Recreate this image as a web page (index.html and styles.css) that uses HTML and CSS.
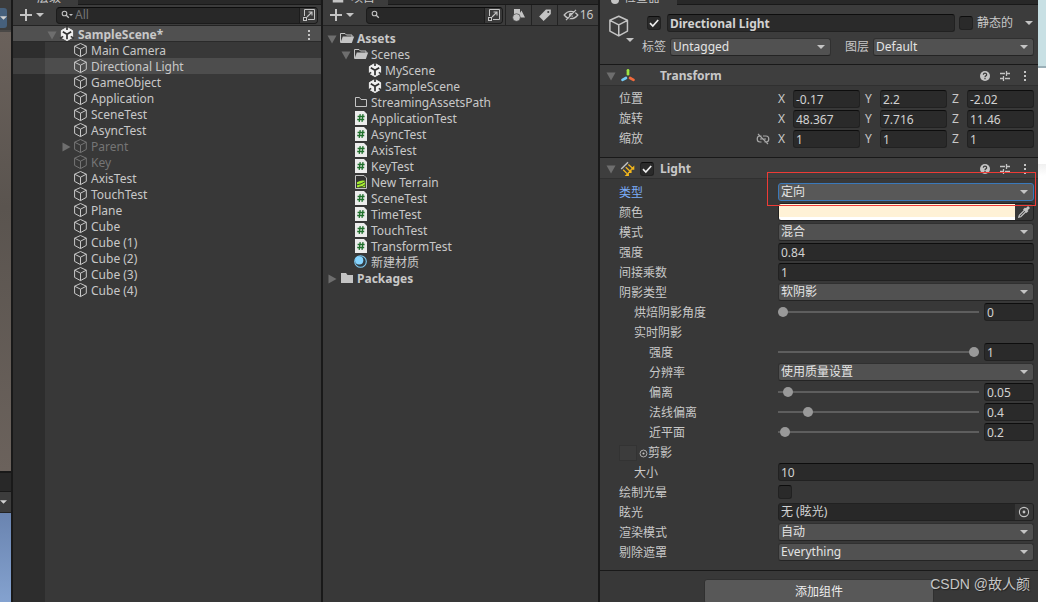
FILE: index.html
```html
<!DOCTYPE html>
<html lang="zh-CN">
<head>
<meta charset="utf-8">
<title>SampleScene - Unity</title>
<link rel="stylesheet" href="styles.css">
</head>
<body>
<svg class="defs" aria-hidden="true">
  <symbol id="cube" viewBox="0 0 16 16"><path d="M8.5 1.5 14.3 4.2V11.4L8.5 14.6 2.6 11.4V4.2ZM2.6 4.2 8.5 7.2 14.3 4.2M8.5 7.2V14.6" fill="none" stroke="currentColor" stroke-width="1" stroke-linejoin="round"/></symbol>
  <symbol id="unity" viewBox="0 0 16 16"><path d="M8 1.4 13.6 4.6V11.4L8 14.6 2.4 11.4V4.6Z" fill="#f0f0f0" stroke="#f0f0f0" stroke-width="1"/><path d="M8 8V13.2M8 8.2 3.8 5.7M8 8.2 12.2 5.7" stroke="#303030" stroke-width="1.7"/><path d="M8 0V4M1 12.4 4.2 10.4M15 12.4 11.8 10.4" stroke="#383838" stroke-width="1.7"/></symbol>
  <symbol id="folder-open" viewBox="0 0 16 16"><path d="M1.5 12.5V3.5H6L7.5 5H13V7" fill="none" stroke="#c4c4c4"/><path d="M3.8 6.5H15.2L12.8 13H1.4Z" fill="#c4c4c4"/></symbol>
  <symbol id="folder-empty" viewBox="0 0 16 16"><path d="M2.5 3.5H6.5L8 5.5H13.5V12.5H2.5Z" fill="none" stroke="#c4c4c4"/></symbol>
  <symbol id="folder" viewBox="0 0 16 16"><path d="M2 3H7L8.5 5H14V13H2Z" fill="#c4c4c4"/></symbol>
  <symbol id="script" viewBox="0 0 16 16"><path d="M2 1H11L14 4V15H2Z" fill="#ececec"/><path d="M7.2 4.2 6.2 11.8M10 4.2 9 11.8M4.6 6.5H11.6M4.2 9.5H11.2" stroke="#1f6f2b" stroke-width="1.3"/></symbol>
  <symbol id="terrain" viewBox="0 0 16 16"><path d="M2.5 14.5V1.5H11L13.5 4V14.5Z" fill="#333" stroke="#c4c4c4"/><path d="M4 8.2Q8 5.5 12.2 6.8V13.2H4Z" fill="#a4f02e"/><path d="M4 10.8Q8 10.5 12.2 7.6M6 13.2Q10 13 12.2 10.6" fill="none" stroke="#333" stroke-width=".9"/></symbol>
  <symbol id="material" viewBox="0 0 16 16"><circle cx="7.5" cy="7.5" r="5.8" fill="#303c44" stroke="#7fcdf5" stroke-width="1.1"/><circle cx="6.2" cy="6.4" r="4.1" fill="#85d4ff"/></symbol>
  <symbol id="plus" viewBox="0 0 12 12"><path d="M6 0V12M0 6H12" stroke="#c4c4c4" stroke-width="2"/></symbol>
  <symbol id="down" viewBox="0 0 8 4"><path d="M0 0H8L4 4Z" fill="currentColor"/></symbol>
  <symbol id="fold-open" viewBox="0 0 10 10"><path d="M0.5 1.5H9.5L5 9.5Z" fill="#6e6e6e"/></symbol>
  <symbol id="fold-closed" viewBox="0 0 10 10"><path d="M1.5 0.5V9.5L9.5 5Z" fill="#6e6e6e"/></symbol>
  <symbol id="search" viewBox="0 0 10 10"><circle cx="3.5" cy="3.5" r="2.3" fill="none" stroke="#c4c4c4" stroke-width="1.1"/><path d="M5.2 5.2 7.8 7.8" stroke="#c4c4c4" stroke-width="1.3"/></symbol>
  <symbol id="popout" viewBox="0 0 14 14"><path d="M2.5 8V1.5H12.5V11.5H6" fill="none" stroke="#c4c4c4"/><rect x="1.5" y="9.5" width="3" height="3" fill="none" stroke="#c4c4c4"/><path d="M5 9 10 4M6.5 4H10V7.5" fill="none" stroke="#c4c4c4" stroke-width="1.1"/></symbol>
  <symbol id="dots" viewBox="0 0 4 12"><path d="M1 1H3V3H1ZM1 5H3V7H1ZM1 9H3V11H1Z" fill="#c4c4c4"/></symbol>
  <symbol id="shapes" viewBox="0 0 14 14"><path d="M2 1H8V6H2ZM9.5 2.5 13 9.5H8.5L7 6.5Z" fill="#c4c4c4"/><circle cx="4.5" cy="9.5" r="3.8" fill="#c4c4c4" stroke="#3a3a3a" stroke-width=".6"/></symbol>
  <symbol id="tag" viewBox="0 0 12 12"><path d="M6.8 1.2H11V5.2L4.8 11.2 1 7.2Z" fill="#c4c4c4"/><circle cx="8.8" cy="3.4" r=".9" fill="#3a3a3a"/></symbol>
  <symbol id="hidden" viewBox="0 0 16 12"><path d="M1.2 6Q4 2.3 8 2.3T14.8 6Q12 9.7 8 9.7T1.2 6Z" fill="none" stroke="#c4c4c4" stroke-width="1.3"/><circle cx="8" cy="6" r="2.2" fill="#c4c4c4"/><path d="M4 11.8 14 .8" stroke="#3a3a3a" stroke-width="1.2"/><path d="M3 11.2 13 .8" stroke="#c4c4c4" stroke-width="1.2"/></symbol>
  <symbol id="help" viewBox="0 0 12 12"><circle cx="6" cy="6" r="5" fill="#c4c4c4"/><path d="M4.3 4.8Q4.4 3.2 6 3.2T7.7 4.7Q7.7 5.5 6.8 5.9 6 6.3 6 7.2M6 8V9.3" fill="none" stroke="#3a3a3a" stroke-width="1.2"/></symbol>
  <symbol id="preset" viewBox="0 0 12 12"><path d="M1 3.5H6M8 3.5H11M7.5 1V6M1 8.5H4M6 8.5H11M4.5 6V11" stroke="#c4c4c4" stroke-width="1.3"/></symbol>
  <symbol id="axes" viewBox="0 0 14 14"><path d="M7 2V5.4" stroke="#9fe644" stroke-width="2.4" stroke-linecap="round"/><path d="M5.2 8.8 2.2 10.4" stroke="#74c9f5" stroke-width="2.4" stroke-linecap="round"/><path d="M8.8 8.8 11.8 10.4" stroke="#f26a3c" stroke-width="2.4" stroke-linecap="round"/></symbol>
  <symbol id="light" viewBox="0 0 16 16"><path d="M1.2 8 8 1.2" stroke="#c4c4c4" stroke-width="1.4"/><path d="M8.4 3.6 12.6 7.2M5.8 6.2 9.8 10M3.2 8.8 7 12.6" stroke="#f5b81c" stroke-width="1.3"/><path d="M14.3 4.6V8.8H10.1ZM11.6 7.7V11.9H7.4ZM8.9 10.8V15H4.7Z" fill="#f5b81c"/></symbol>
  <symbol id="unlink" viewBox="0 0 14 12"><path d="M5.5 3H4Q1.2 3 1.2 6T4 9H5.5M7 3H10Q12.8 3 12.8 6T10 9H8.5M4 6H10M2 1 12 11" fill="none" stroke="#a8a8a8" stroke-width="1.2"/></symbol>
  <symbol id="dropper" viewBox="0 0 12 12"><path d="M1.5 10.5 2 8.8 6.5 4.3 7.8 5.6 3.2 10.1Z" fill="none" stroke="#c4c4c4"/><path d="M6 3 9 6M7.5 4.5 10.3 1.7" stroke="#c4c4c4" stroke-width="2.4"/></symbol>
  <symbol id="target" viewBox="0 0 12 12"><circle cx="6" cy="6" r="4.6" fill="none" stroke="#c4c4c4" stroke-width="1.1"/><circle cx="6" cy="6" r="1.4" fill="#c4c4c4"/></symbol>
  <symbol id="check" viewBox="0 0 12 12"><path d="M2 6.2 4.8 9 10.2 3" fill="none" stroke="#eee" stroke-width="1.7"/></symbol>
</svg>

<main class="editor">
  <aside class="scene-edge">
    <div class="edge-bar"><button class="edge-tool" aria-label="工具"><svg><use href="#down"/></svg></button></div>
    <div class="edge-scene"></div>
    <div class="edge-tab"></div>
    <div class="edge-bar2"><svg><use href="#down"/></svg></div>
    <div class="edge-sky"></div>
  </aside>

  <section class="panel hierarchy">
    <div class="tabs"><span class="tab">层级</span></div>
    <div class="toolbar">
      <button class="add" aria-label="创建"><svg class="plus"><use href="#plus"/></svg><svg class="caret"><use href="#down"/></svg></button>
      <div class="search"><svg class="mag"><use href="#search"/></svg><svg class="tiny"><use href="#down"/></svg><input type="text" aria-label="搜索层级" placeholder="All"><button aria-label="打开搜索"><svg><use href="#popout"/></svg></button></div>
    </div>
    <ul class="tree">
      <li class="scene"><svg class="fold"><use href="#fold-open"/></svg><svg class="ico"><use href="#unity"/></svg><b>SampleScene*</b><button class="more" aria-label="更多"><svg><use href="#dots"/></svg></button></li>
      <li><svg class="ico"><use href="#cube"/></svg>Main Camera</li>
      <li class="selected"><svg class="ico"><use href="#cube"/></svg>Directional Light</li>
      <li><svg class="ico"><use href="#cube"/></svg>GameObject</li>
      <li><svg class="ico"><use href="#cube"/></svg>Application</li>
      <li><svg class="ico"><use href="#cube"/></svg>SceneTest</li>
      <li><svg class="ico"><use href="#cube"/></svg>AsyncTest</li>
      <li class="off parent"><svg class="fold"><use href="#fold-closed"/></svg><svg class="ico"><use href="#cube"/></svg>Parent</li>
      <li class="off"><svg class="ico"><use href="#cube"/></svg>Key</li>
      <li><svg class="ico"><use href="#cube"/></svg>AxisTest</li>
      <li><svg class="ico"><use href="#cube"/></svg>TouchTest</li>
      <li><svg class="ico"><use href="#cube"/></svg>Plane</li>
      <li><svg class="ico"><use href="#cube"/></svg>Cube</li>
      <li><svg class="ico"><use href="#cube"/></svg>Cube (1)</li>
      <li><svg class="ico"><use href="#cube"/></svg>Cube (2)</li>
      <li><svg class="ico"><use href="#cube"/></svg>Cube (3)</li>
      <li><svg class="ico"><use href="#cube"/></svg>Cube (4)</li>
    </ul>
  </section>

  <section class="panel project">
    <div class="tabs"><span class="tab"><svg><use href="#folder"/></svg>项目</span></div>
    <div class="toolbar">
      <button class="add" aria-label="创建"><svg class="plus"><use href="#plus"/></svg><svg class="caret"><use href="#down"/></svg></button>
      <div class="search"><svg class="mag"><use href="#search"/></svg><input type="text" aria-label="搜索项目"><button aria-label="打开搜索"><svg><use href="#popout"/></svg></button></div>
      <div class="filters">
        <button class="filter" aria-label="按类型"><svg><use href="#shapes"/></svg></button>
        <button class="filter" aria-label="按标签"><svg><use href="#tag"/></svg></button>
        <button class="filter count"><svg class="eye"><use href="#hidden"/></svg>16</button>
      </div>
    </div>
    <ul class="files">
      <li><svg class="fold"><use href="#fold-open"/></svg><svg class="ico"><use href="#folder-open"/></svg><b>Assets</b></li>
      <li class="d1"><svg class="fold"><use href="#fold-open"/></svg><svg class="ico"><use href="#folder-open"/></svg>Scenes</li>
      <li class="d3"><svg class="ico"><use href="#unity"/></svg>MyScene</li>
      <li class="d3"><svg class="ico"><use href="#unity"/></svg>SampleScene</li>
      <li class="d2"><svg class="ico"><use href="#folder-empty"/></svg>StreamingAssetsPath</li>
      <li class="d2"><svg class="ico"><use href="#script"/></svg>ApplicationTest</li>
      <li class="d2"><svg class="ico"><use href="#script"/></svg>AsyncTest</li>
      <li class="d2"><svg class="ico"><use href="#script"/></svg>AxisTest</li>
      <li class="d2"><svg class="ico"><use href="#script"/></svg>KeyTest</li>
      <li class="d2"><svg class="ico"><use href="#terrain"/></svg>New Terrain</li>
      <li class="d2"><svg class="ico"><use href="#script"/></svg>SceneTest</li>
      <li class="d2"><svg class="ico"><use href="#script"/></svg>TimeTest</li>
      <li class="d2"><svg class="ico"><use href="#script"/></svg>TouchTest</li>
      <li class="d2"><svg class="ico"><use href="#script"/></svg>TransformTest</li>
      <li class="d2"><svg class="ico"><use href="#material"/></svg>新建材质</li>
      <li><svg class="fold"><use href="#fold-closed"/></svg><svg class="ico"><use href="#folder"/></svg><b>Packages</b></li>
    </ul>
  </section>

  <section class="panel inspector">
    <div class="tabs"><span class="tab"><i class="dot"></i>检查器</span></div>
    <header class="object">
      <div class="object-icon"><svg class="big"><use href="#cube"/></svg><svg class="caret"><use href="#down"/></svg></div>
      <div class="object-fields">
        <div class="line">
          <label class="box"><input type="checkbox" checked aria-label="启用"><svg><use href="#check"/></svg></label>
          <input class="field name" type="text" aria-label="名称" value="Directional Light">
          <label class="static"><span class="box"><input type="checkbox"><svg><use href="#check"/></svg></span>静态的</label>
          <button class="static-menu" aria-label="静态选项"><svg class="caret"><use href="#down"/></svg></button>
        </div>
        <div class="line tags">
          <label for="tag-sel">标签</label>
          <span class="drop"><select id="tag-sel"><option>Untagged</option></select></span>
          <label class="layer" for="layer-sel">图层</label>
          <span class="drop"><select id="layer-sel"><option>Default</option></select></span>
        </div>
      </div>
    </header>

    <header class="component"><svg class="fold"><use href="#fold-open"/></svg><svg class="kind"><use href="#axes"/></svg><h2>Transform</h2>
      <div class="actions"><button aria-label="帮助"><svg><use href="#help"/></svg></button><button aria-label="预设"><svg><use href="#preset"/></svg></button><button aria-label="更多"><svg class="dots"><use href="#dots"/></svg></button></div></header>
    <div class="props transform">
      <div class="row"><span>位置</span><div class="xyz"><label>X<input class="field" type="text" value="-0.17"></label><label>Y<input class="field" type="text" value="2.2"></label><label>Z<input class="field" type="text" value="-2.02"></label></div></div>
      <div class="row"><span>旋转</span><div class="xyz"><label>X<input class="field" type="text" value="48.367"></label><label>Y<input class="field" type="text" value="7.716"></label><label>Z<input class="field" type="text" value="11.46"></label></div></div>
      <div class="row"><span class="scale">缩放<svg><use href="#unlink"/></svg></span><div class="xyz"><label>X<input class="field" type="text" value="1"></label><label>Y<input class="field" type="text" value="1"></label><label>Z<input class="field" type="text" value="1"></label></div></div>
    </div>

    <header class="component"><svg class="fold"><use href="#fold-open"/></svg><svg class="kind"><use href="#light"/></svg><label class="box"><input type="checkbox" checked aria-label="启用 Light"><svg><use href="#check"/></svg></label><h2>Light</h2>
      <div class="actions"><button aria-label="帮助"><svg><use href="#help"/></svg></button><button aria-label="预设"><svg><use href="#preset"/></svg></button><button aria-label="更多"><svg class="dots"><use href="#dots"/></svg></button></div></header>
    <div class="props light">
      <div class="row"><label class="active" for="type">类型</label><span class="drop focus"><select id="type"><option>定向</option></select><i class="marker"></i></span></div>
      <div class="row"><span>颜色</span><div class="color"><button class="swatch" aria-label="颜色"></button><button class="pick" aria-label="吸管"><svg><use href="#dropper"/></svg></button></div></div>
      <div class="row"><label for="mode">模式</label><span class="drop"><select id="mode"><option>混合</option></select></span></div>
      <div class="row"><label for="intensity">强度</label><input id="intensity" class="field" type="text" value="0.84"></div>
      <div class="row"><label for="bounce">间接乘数</label><input id="bounce" class="field" type="text" value="1"></div>
      <div class="row"><label for="shadow">阴影类型</label><span class="drop"><select id="shadow"><option>软阴影</option></select></span></div>
      <div class="row in1"><label for="angle">烘焙阴影角度</label><div class="slide"><input id="angle" type="range" min="0" max="90" value="0"><input class="field" type="text" aria-label="烘焙阴影角度值" value="0"></div></div>
      <div class="row in1"><span>实时阴影</span></div>
      <div class="row in2"><label for="strength">强度</label><div class="slide"><input id="strength" type="range" min="0" max="1" step="0.01" value="1"><input class="field" type="text" aria-label="强度值" value="1"></div></div>
      <div class="row in2"><label for="res">分辨率</label><span class="drop"><select id="res"><option>使用质量设置</option></select></span></div>
      <div class="row in2"><label for="bias">偏离</label><div class="slide"><input id="bias" type="range" min="0" max="2" step="0.01" value="0.05"><input class="field" type="text" aria-label="偏离值" value="0.05"></div></div>
      <div class="row in2"><label for="normal">法线偏离</label><div class="slide"><input id="normal" type="range" min="0" max="3" step="0.01" value="0.4"><input class="field" type="text" aria-label="法线偏离值" value="0.4"></div></div>
      <div class="row in2"><label for="near">近平面</label><div class="slide"><input id="near" type="range" min="0.1" max="10" step="0.1" value="0.2"><input class="field" type="text" aria-label="近平面值" value="0.2"></div></div>
      <div class="row"><span class="cookie"><i class="thumb"></i><svg><use href="#target"/></svg>剪影</span></div>
      <div class="row in1"><label for="size">大小</label><input id="size" class="field" type="text" value="10"></div>
      <div class="row"><label for="halo">绘制光晕</label><span class="box"><input id="halo" type="checkbox"><svg><use href="#check"/></svg></span></div>
      <div class="row"><label for="flare">眩光</label><div class="object-ref"><input id="flare" type="text" value="无 (眩光)"><button aria-label="选择眩光"><svg><use href="#target"/></svg></button></div></div>
      <div class="row"><label for="render">渲染模式</label><span class="drop"><select id="render"><option>自动</option></select></span></div>
      <div class="row"><label for="cull">剔除遮罩</label><span class="drop"><select id="cull"><option>Everything</option></select></span></div>
    </div>
    <footer class="add-component"><button>添加组件</button></footer>
  </section>

  <aside class="page-edge"><div class="sky"></div><div class="paper"></div><div class="shade"></div></aside>
  <span class="credit">CSDN @故人颜</span>
</main>
</body>
</html>
```
FILE: styles.css
```css
* { box-sizing: border-box; }
html, body { height: 100%; margin: 0; }
body {
  overflow: hidden;
  background: #383838;
  color: #c8c8c8;
  font: 12px/16px "Noto Sans", "Noto Sans CJK SC", sans-serif;
}
button, input, select { font: inherit; color: inherit; margin: 0; padding: 0; border: 0; background: none; outline: 0; min-width: 0; }
button { display: flex; align-items: center; justify-content: center; }
svg { display: block; flex: none; }
ul { list-style: none; margin: 0; padding: 0; }
.defs { position: absolute; width: 0; height: 0; }

.editor {
  position: relative;
  display: grid;
  grid-template-columns: 13px minmax(0, 310fr) minmax(0, 277fr) minmax(0, 438fr) 8px;
  height: 100vh;
}
.panel { display: flex; flex-direction: column; overflow: hidden; }
.hierarchy, .project { border-right: 2px solid #191919; }

/* edges of the neighbouring windows */
.scene-edge { display: flex; flex-direction: column; border-right: 2px solid #191919; color: #d2d2d2; }
.edge-bar { height: 32px; padding-top: 8px; background: #3c3c3c; border-bottom: 2px solid #4a4846; }
.edge-tool { width: 7px; height: 20px; background: #46607c; border-radius: 0 3px 3px 0; }
.edge-tool svg, .edge-bar2 svg { width: 7px; height: 4px; }
.edge-scene { flex: 1; background: linear-gradient(#6a615b, #5a544f 40%, #6b625c); border-bottom: 2px solid #191919; }
.edge-tab { height: 19px; background: #282828; border-bottom: 1px solid #191919; }
.edge-bar2 { height: 21px; padding-top: 8px; background: #3c3c3c; border-bottom: 1px solid #232323; }
.edge-sky { height: 89px; background: linear-gradient(#6a84b0, #84a2cf); }
.page-edge { background: #fff; }
.page-edge .sky { height: 68px; background: #c8e0e4; border-bottom: 2px solid #9bb0b8; }
.page-edge .paper { height: 96px; }
.page-edge .shade { height: 12px; background: linear-gradient(#f0f0f0, #fff); }

/* tabs and toolbars */
.tabs { display: flex; height: 5px; flex: none; overflow: hidden; align-items: flex-end; background: linear-gradient(#282828 4px, #191919 4px); }
.tab { display: flex; align-items: center; gap: 6px; height: 15px; flex: none; background: #3c3c3c; line-height: 15px; }
.tab svg { width: 14px; height: 14px; }
.hierarchy .tab { padding: 0 17px 0 24px; }
.project .tab { padding: 0 13px 0 8px; }
.inspector .tab { padding: 0 17px 0 11px; }
.dot { width: 8px; height: 12px; border-radius: 4px; background: #c4c4c4; margin-right: -1px; }
.toolbar { display: flex; align-items: center; height: 21px; flex: none; background: #3c3c3c; border-bottom: 1px solid #232323; padding-left: 7px; }
.add { gap: 4px; margin-right: 12px; color: #c4c4c4; }
.plus { width: 12px; height: 12px; }
.caret { width: 8px; height: 4px; color: #c4c4c4; }
.search { flex: 1; min-width: 0; display: flex; align-items: center; height: 17px; padding-left: 4px; background: #282828; border: 1px solid #1c1c1c; border-top-color: #0d0d0d; border-radius: 4px; }
.search input { flex: 1; height: 15px; }
.search input::placeholder { color: #757575; opacity: 1; }
.search button { width: 18px; height: 15px; background: #3a3a3a; border-radius: 0 3px 3px 0; border-left: 1px solid #1c1c1c; }
.search button svg { width: 14px; height: 14px; }
.mag { width: 10px; height: 10px; }
.tiny { width: 4px; height: 2px; margin: 0 2px 0 -2px; color: #c4c4c4; }
.hierarchy .search { margin-right: 3px; }
.filters { display: flex; align-self: stretch; margin-left: 2px; }
.filter { width: 26px; border-left: 1px solid #232323; }
.filter svg { width: 14px; height: 14px; }
.filter.count { width: 41px; gap: 1px; }
.filter .eye { width: 16px; height: 12px; }

/* lists */
.tree { flex: 1; background: linear-gradient(90deg, #2d2d2d 32px, transparent 32px); }
.tree li, .files li { display: flex; align-items: center; height: 16px; padding-top: 2px; white-space: nowrap; }
.tree li { padding-left: 59px; }
.tree .scene { padding-left: 34px; background: #505050; border-bottom: 1px solid #2a2a2a; }
.tree .scene .ico { margin-left: 2px; }
.tree .selected { background: linear-gradient(90deg, #404040 32px, #4d4d4d 32px); }
.tree .off { color: #757575; }
.tree .parent { padding-left: 48px; }
.tree .parent .ico { margin-left: 1px; }
.ico { width: 16px; height: 16px; margin: 0 3px 2px 0; }
.fold { width: 10px; height: 10px; }
.more { margin-left: auto; margin-right: 10px; }
.more svg { width: 4px; height: 12px; }
.files { padding: 4px 0 0 4px; }
.files .ico { margin: 0 2px 2px; }
.files .d1 { padding-left: 14px; }
.files .d2 { padding-left: 24px; }
.files .d3 { padding-left: 38px; }

/* form controls */
.field { display: block; width: 100%; height: 18px; padding: 0 2px; background: #2a2a2a; border: 1px solid #212121; border-top-color: #0d0d0d; border-radius: 3px; color: #d2d2d2; }
.drop { position: relative; display: block; min-width: 0; height: 18px; }
.drop select { appearance: none; display: block; width: 100%; height: 18px; padding: 0 16px 0 2px; background: #515151; border: 1px solid #303030; border-bottom-color: #242424; border-radius: 3px; color: #e4e4e4; line-height: 16px; }
.drop::after { content: ""; position: absolute; right: 6px; top: 7px; border: 4px solid transparent; border-top-color: #c4c4c4; border-bottom: 0; pointer-events: none; }
.drop.focus select { background: #585858; border-color: #3a79bb; }
.marker { position: absolute; inset: -11px -2px -5px -11px; border: 1px solid #ee3b36; pointer-events: none; }
.box { position: relative; display: block; width: 14px; height: 14px; flex: none; }
.box input { appearance: none; display: block; width: 14px; height: 14px; background: #2a2a2a; border: 1px solid #212121; border-top-color: #0d0d0d; border-radius: 3px; }
.box svg { position: absolute; inset: 1px; width: 12px; height: 12px; visibility: hidden; pointer-events: none; }
.box input:checked + svg { visibility: visible; }

/* inspector */
.object { display: flex; padding: 9px 4px 8px 6px; background: #3c3c3c; border-bottom: 1px solid #191919; }
.object-icon { width: 36px; color: #c4c4c4; }
.object-icon .big { width: 24px; height: 24px; }
.object-icon .caret { margin-left: 20px; }
.object-fields { flex: 1; min-width: 0; display: grid; gap: 6px; }
.line { display: flex; align-items: center; height: 18px; margin-left: 5px; }
.name { flex: 1; margin-left: 6px; font-weight: bold; }
.static { display: flex; align-items: center; gap: 4px; margin-left: 4px; }
.static-menu { margin: 0 1px 0 12px; }
.line.tags { display: grid; margin-left: 0; grid-template-columns: 28px minmax(0, 161fr) 42px minmax(0, 161fr); }
.layer { padding-left: 14px; }
.component { display: flex; align-items: center; height: 21px; flex: none; padding: 1px 7px 0 6px; background: #3e3e3e; border-bottom: 1px solid #303030; }
.component h2 { margin: 0; font-size: 12px; line-height: 16px; }
.kind { width: 16px; height: 16px; margin-left: 4px; }
.kind + h2 { margin-left: 24px; }
.component .box { margin: 0 6px 0 4px; }
.actions { display: flex; gap: 8px; margin-left: auto; }
.actions button, .actions svg { width: 12px; height: 12px; }
.actions .dots { width: 4px; }
.props { display: grid; grid-auto-rows: 18px; gap: 2px; padding: 4px 4px 9px 18px; border-bottom: 1px solid #191919; }
.row { display: grid; grid-template-columns: minmax(0, 160fr) minmax(0, 256fr); align-items: center; white-space: nowrap; }
.row > :first-child { padding-left: 1px; }
.light .row > :first-child { padding-top: 2px; }
.row.in1 > :first-child { padding-left: 16px; }
.row.in2 > :first-child { padding-left: 31px; }
.active { color: #7baefa; }
.xyz { display: grid; grid-template-columns: repeat(3, minmax(0, 1fr)); gap: 5px; }
.xyz label { display: grid; grid-template-columns: 15px minmax(0, 1fr); align-items: center; }
.scale { display: flex; align-items: center; justify-content: space-between; padding-right: 8px; }
.scale svg { width: 14px; height: 12px; }
.slide { display: grid; grid-template-columns: minmax(0, 1fr) 50px; gap: 5px; }
.slide input[type=range] { appearance: none; width: 100%; height: 18px; background: linear-gradient(#5e5e5e, #5e5e5e) center / 100% 2px no-repeat; }
.slide input::-webkit-slider-thumb { appearance: none; width: 10px; height: 10px; border-radius: 50%; background: #999; }
.color, .object-ref { display: flex; height: 18px; border: 1px solid #212121; border-radius: 3px; overflow: hidden; }
.swatch { flex: 1; background: linear-gradient(#fff2d6 13px, #fff 13px); }
.pick { width: 18px; }
.pick svg { width: 14px; height: 14px; }
.object-ref { background: #282828; }
.object-ref input { flex: 1; padding-left: 2px; color: #d2d2d2; }
.object-ref button { width: 18px; background: #363636; }
.object-ref svg { width: 12px; height: 12px; }
.cookie { display: flex; align-items: center; }
.cookie .thumb { width: 18px; height: 16px; margin-right: 2px; border: 1px solid #333; background: #3c3c3c; }
.cookie svg { width: 9px; height: 9px; }
.add-component { display: flex; justify-content: center; padding-top: 8px; }
.add-component button { width: 230px; height: 25px; background: #585858; border: 1px solid #303030; border-radius: 3px; color: #eee; }
.credit { position: absolute; right: 16px; bottom: 8px; font: 14px/20px "Liberation Sans", "Noto Sans CJK SC", sans-serif; color: #c6c6c6; text-shadow: 1px 1px 1px #222; }
```
